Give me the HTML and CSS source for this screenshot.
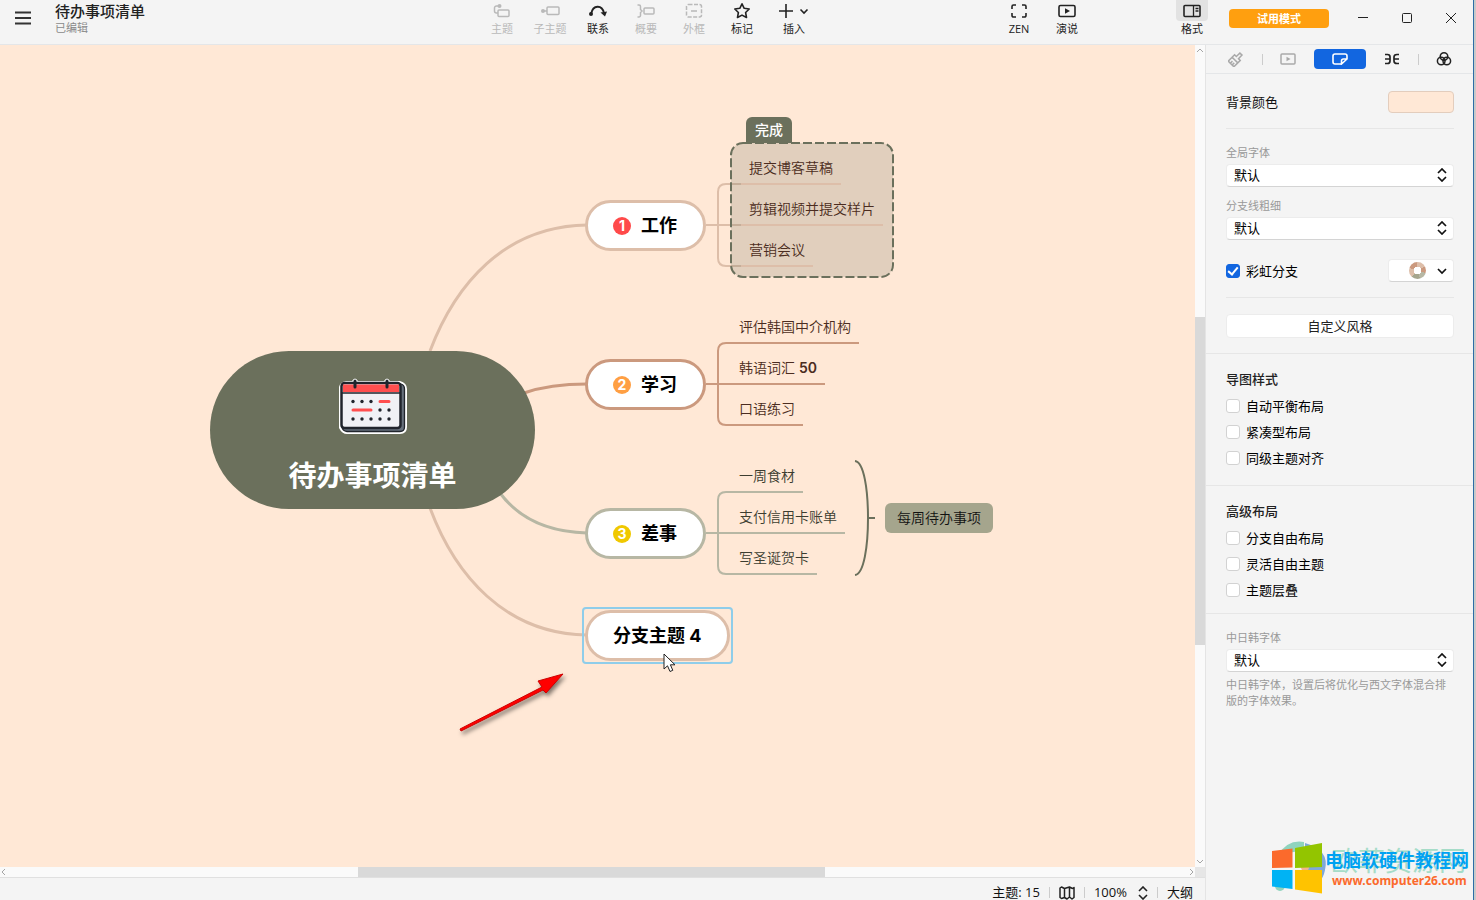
FILE: index.html
```html
<!DOCTYPE html>
<html lang="zh-CN">
<head>
<meta charset="utf-8">
<title>待办事项清单</title>
<link rel="stylesheet" href="styles.css">
</head>
<body>
<div class="desktop">
<div class="app">
  <header class="topbar">
    <div class="brand">
      <button class="menu-btn" aria-label="菜单"><svg width="16" height="14" viewBox="0 0 16 14"><path d="M0 1.500h16M0 7h16M0 12.500h16" stroke="#333" stroke-width="1.800" fill="none"/></svg></button>
      <div class="doc"><h1>待办事项清单</h1><p>已编辑</p></div>
    </div>
    <nav class="tools">
      <button class="tool" disabled><span class="tool-icon"><svg width="18" height="16" viewBox="0 0 18 16"><g fill="none" stroke="currentColor" stroke-width="1.500"><rect x="5" y="7" width="11" height="6.500" rx="1"/><path d="M5 10H3.500A2 2 0 0 1 1.500 8V5A2 2 0 0 1 3.500 3H6"/></g><circle cx="6.500" cy="3" r="2" fill="currentColor"/></svg></span>主题</button>
      <button class="tool" disabled><span class="tool-icon"><svg width="20" height="16" viewBox="0 0 20 16"><rect x="7" y="4" width="12" height="7.500" rx="1" fill="none" stroke="currentColor" stroke-width="1.500"/><path d="M3 8h4" stroke="currentColor" stroke-width="1.500"/><circle cx="3" cy="8" r="2" fill="currentColor"/></svg></span>子主题</button>
      <button class="tool"><span class="tool-icon"><svg width="20" height="16" viewBox="0 0 20 16"><path d="M3 11C5 1.500 14 1.500 16 10" fill="none" stroke="currentColor" stroke-width="1.800"/><circle cx="3" cy="11" r="2" fill="currentColor"/><path d="M12.500 9.500L19 8.500L17 13.500Z" fill="currentColor"/></svg></span>联系</button>
      <button class="tool" disabled><span class="tool-icon"><svg width="20" height="16" viewBox="0 0 20 16"><path d="M1.500 2H3A1.500 1.500 0 0 1 4.500 3.500V6.500L6 8L4.500 9.500V12.500A1.500 1.500 0 0 1 3 14H1.500" fill="none" stroke="currentColor" stroke-width="1.500"/><rect x="8" y="5" width="10" height="6" rx="1" fill="none" stroke="currentColor" stroke-width="1.500"/></svg></span>概要</button>
      <button class="tool" disabled><span class="tool-icon"><svg width="18" height="16" viewBox="0 0 18 16"><rect x="1.500" y="1.500" width="15" height="12.500" rx="2" fill="none" stroke="currentColor" stroke-width="1.500" stroke-dasharray="4 1.500"/><path d="M6 8h6" stroke="currentColor" stroke-width="1.500"/></svg></span>外框</button>
      <button class="tool"><span class="tool-icon"><svg width="18" height="18" viewBox="0 0 18 18"><path d="M9 1.800L11.200 6.300L16.200 7L12.600 10.500L13.500 15.500L9 13.100L4.500 15.500L5.400 10.500L1.800 7L6.800 6.300Z" fill="none" stroke="currentColor" stroke-width="1.600" stroke-linejoin="round"/></svg></span>标记</button>
      <button class="tool tool-wide"><span class="tool-icon"><svg width="30" height="16" viewBox="0 0 30 16"><path d="M0 8h14M7 1v14M21.500 6.500L25 10L28.500 6.500" fill="none" stroke="currentColor" stroke-width="1.600"/></svg></span>插入</button>
    </nav>
    <nav class="tools tools-view">
      <button class="tool"><span class="tool-icon"><svg width="18" height="16" viewBox="0 0 18 16"><path d="M6 2H3.500A1.500 1.500 0 0 0 2 3.500V6M12 2h2.500A1.500 1.500 0 0 1 16 3.500V6M2 10v2.500A1.500 1.500 0 0 0 3.500 14H6M16 10v2.500a1.500 1.500 0 0 1-1.500 1.500H12" fill="none" stroke="currentColor" stroke-width="1.600"/></svg></span>ZEN</button>
      <button class="tool"><span class="tool-icon"><svg width="18" height="16" viewBox="0 0 18 16"><rect x="1" y="2.500" width="16" height="11" rx="1.500" fill="none" stroke="currentColor" stroke-width="1.600"/><path d="M7 5.300V10.700L12 8Z" fill="currentColor"/></svg></span>演说</button>
    </nav>
    <nav class="tools tools-format">
      <button class="tool"><span class="tool-icon tool-on"><svg width="18" height="16" viewBox="0 0 18 16"><rect x="1" y="2.500" width="16" height="11" rx="1" fill="none" stroke="currentColor" stroke-width="1.600"/><path d="M10.500 2.500v11M12.500 5.500h3M12.500 8h3" fill="none" stroke="currentColor" stroke-width="1.300"/></svg></span>格式</button>
    </nav>
    <button class="trial">试用模式</button>
    <div class="win">
      <button aria-label="最小化"><svg width="12" height="12" viewBox="0 0 12 12"><path d="M1 5.500h10" stroke="#222"/></svg></button>
      <button aria-label="最大化"><svg width="12" height="12" viewBox="0 0 12 12"><rect x="1.500" y="1.500" width="9" height="9" rx="1" stroke="#222" fill="none"/></svg></button>
      <button aria-label="关闭"><svg width="12" height="12" viewBox="0 0 12 12"><path d="M1 1l10 10M11 1L1 11" stroke="#222"/></svg></button>
    </div>
  </header>

  <div class="work">
    <div class="editor">
      <main class="canvas">
        <svg class="links" width="1195" height="822" viewBox="0 45 1195 822" fill="none">
          <g stroke-width="3">
            <path d="M430 351C455 285 504 226 587 225" stroke="#ddbea9"/>
            <path d="M430 508C455 575 505 634 587 635" stroke="#ddbea9"/>
            <path d="M524 393Q550 384 587 384" stroke="#cb997e"/>
            <path d="M500 493C520 520 550 532 587 533" stroke="#b7b7a4"/>
          </g>
          <g stroke-width="2">
            <path d="M706 225H741M741 184H726Q718 184 718 192V258Q718 266 726 266H741" stroke="#ddbea9"/>
            <path d="M706 384H825M859 343H726Q718 343 718 351V417Q718 425 726 425H803" stroke="#cb997e"/>
            <path d="M706 533H845M803 492H726Q718 492 718 500V566Q718 574 726 574H817" stroke="#b7b7a4"/>
            <rect x="731" y="143" width="162" height="134" rx="12" fill="#6b705c" fill-opacity=".2" stroke="#6b705c" stroke-dasharray="9 3"/>
            <path d="M741 184H841M741 225H883M741 266H813" stroke="#ddbea9"/>
            <path d="M855 461C864 462 868 490 868 518C868 546 864 574 855 575M868 518H875" stroke="#6b705c"/>
          </g>
        </svg>

        <div class="node root">
          <svg width="70" height="58" viewBox="0 0 70 58">
            <path d="M8 3H14Q17 -2 20 3H46Q49 -2 52 3H62Q69 5 69 11V49Q69 56 62 56H9Q4 56 1 50V9Q2 4 8 3Z" fill="#fff"/>
            <path d="M5 6H63Q66.500 7 66.500 11V49Q66.500 53.500 62 53.500H9Q4.500 53 4 49Z" fill="#66707c" stroke="#20242c" stroke-width="1.300"/>
            <rect x="3.500" y="5" width="59" height="45" rx="3" fill="#f0f1f5" stroke="#20242c" stroke-width="2.500"/>
            <path d="M5 6.500H61V14H5Z" fill="#ff4f4f"/><path d="M4 15H62" stroke="#20242c" stroke-width="1.500"/>
            <path d="M17 3V9M49 3V9" stroke="#20242c" stroke-width="3" stroke-linecap="round"/>
            <g fill="#20242c"><circle cx="15" cy="23.500" r="1.700"/><circle cx="24" cy="23.500" r="1.700"/><circle cx="33" cy="23.500" r="1.700"/><circle cx="42" cy="32" r="1.700"/><circle cx="51" cy="32" r="1.700"/><circle cx="15" cy="41" r="1.700"/><circle cx="24" cy="41" r="1.700"/><circle cx="33" cy="41" r="1.700"/><circle cx="42" cy="41" r="1.700"/><circle cx="51" cy="41" r="1.700"/></g>
            <path d="M42 23.500H51M15 32H33" stroke="#ff4f4f" stroke-width="3" stroke-linecap="round"/>
          </svg>
          <span>待办事项清单</span>
        </div>

        <div class="node branch b1"><span class="num">1</span>工作</div>
        <div class="node branch b2"><span class="num">2</span>学习</div>
        <div class="node branch b3"><span class="num">3</span>差事</div>
        <div class="node branch b4">分支主题 4</div>
        <div class="node selection"></div>

        <div class="node tag">完成</div>
        <div class="node leaves l1"><span>提交博客草稿</span><span>剪辑视频并提交样片</span><span>营销会议</span></div>
        <div class="node leaves l2"><span>评估韩国中介机构</span><span>韩语词汇 <b>50</b></span><span>口语练习</span></div>
        <div class="node leaves l3"><span>一周食材</span><span>支付信用卡账单</span><span>写圣诞贺卡</span></div>
        <div class="node summary">每周待办事项</div>

        <svg class="node arrow" width="120" height="72" viewBox="0 0 120 72">
          <path d="M6 59L88 17L84 11L109 4L92 23L89 20L7 61Z" fill="red" stroke="#c00" stroke-width="1" stroke-linejoin="round"/>
        </svg>
        <svg class="node pointer" width="14" height="20" viewBox="0 0 14 20"><path d="M1 1V16L4.500 12.800L7 18.500L9.800 17.300L7.400 11.800H12Z" fill="#fff" stroke="#222"/></svg>
      </main>
      <div class="vscroll"><svg width="8" height="8" viewBox="0 0 8 8"><path d="M1 6L4 3L7 6" fill="none" stroke="#a5a5a5"/></svg><i class="vthumb"></i><svg width="8" height="8" viewBox="0 0 8 8"><path d="M1 2L4 5L7 2" fill="none" stroke="#a5a5a5"/></svg></div>
      <div class="hscroll"><svg width="8" height="8" viewBox="0 0 8 8"><path d="M5 1L2 4L5 7" fill="none" stroke="#a5a5a5"/></svg><i class="hthumb"></i><svg width="8" height="8" viewBox="0 0 8 8"><path d="M3 1L6 4L3 7" fill="none" stroke="#a5a5a5"/></svg></div>
      <div class="corner"></div>
      <footer class="status">
        <span>主题: 15</span><i class="bar"></i>
        <button aria-label="导航图"><svg width="16" height="14" viewBox="0 0 16 14"><path d="M1 2L2.500 1L5.500 2.500L10.500 1L13.500 2.500L15 1.500V11.500L13 13L10.500 11L8 13L5.500 11.500L2.500 12.500L1 11.500ZM5.500 2.500V11.500M10.500 1V11" fill="none" stroke="#222" stroke-width="1.500" stroke-linejoin="round"/></svg></button><i class="bar"></i>
        <button class="zoom">100%<svg width="10" height="14" viewBox="0 0 10 14"><path d="M1 5L5 1L9 5M1 9L5 13L9 9" fill="none" stroke="#222" stroke-width="1.600"/></svg></button><i class="bar"></i>
        <button>大纲</button>
      </footer>
    </div>

    <aside class="panel">
      <nav class="tabs">
        <button class="off" aria-label="样式"><svg width="16" height="16" viewBox="0 0 16 16"><g transform="rotate(45 8 8)" fill="none" stroke="currentColor" stroke-width="1.500"><path d="M6.500 1H9.500V6H12V9.500H4V6H6.500ZM4 9.500V15H12V9.500M7 15V12M9.500 15V12"/></g></svg></button>
        <i class="bar"></i>
        <button class="off" aria-label="演说"><svg width="16" height="12" viewBox="0 0 16 12"><rect x="1" y="1" width="14" height="10" rx="1" fill="none" stroke="currentColor" stroke-width="1.500"/><path d="M6.500 3.800V8.200L10.500 6Z" fill="currentColor"/></svg></button>
        <button class="on" aria-label="画布"><svg width="16" height="12" viewBox="0 0 16 12"><path d="M9 11H3A2 2 0 0 1 1 9V3A2 2 0 0 1 3 1H13A2 2 0 0 1 15 3V6L9.500 11V8A2 2 0 0 1 11.500 6H15" fill="none" stroke="currentColor" stroke-width="1.600"/></svg></button>
        <button aria-label="骨架"><svg width="16" height="12" viewBox="0 0 16 12"><path d="M1 1.500H3.500Q6 1.500 6 4V8Q6 10.500 3.500 10.500H1M1 6H6M10 6H15M15 1.500H13Q10 1.500 10 4V8Q10 10.500 13 10.500H15" fill="none" stroke="currentColor" stroke-width="1.700"/></svg></button>
        <i class="bar"></i>
        <button aria-label="配色"><svg width="16" height="16" viewBox="0 0 16 16"><g fill="none" stroke="currentColor" stroke-width="1.500"><circle cx="8" cy="5.500" r="3.800"/><circle cx="5.200" cy="10" r="3.800"/><circle cx="10.800" cy="10" r="3.800"/></g></svg></button>
      </nav>

      <section class="block">
        <div class="row split"><label for="bg">背景颜色</label><button id="bg" class="swatch" aria-label="背景颜色"></button></div>
        <hr>
        <label class="cap" for="font">全局字体</label>
        <div class="pick"><select id="font"><option>默认</option></select><svg width="10" height="14" viewBox="0 0 10 14"><path d="M1 5L5 1L9 5M1 9L5 13L9 9" fill="none" stroke="#111" stroke-width="1.700"/></svg></div>
        <label class="cap cap-next" for="line">分支线粗细</label>
        <div class="pick"><select id="line"><option>默认</option></select><svg width="10" height="14" viewBox="0 0 10 14"><path d="M1 5L5 1L9 5M1 9L5 13L9 9" fill="none" stroke="#111" stroke-width="1.700"/></svg></div>
        <div class="row split rainbow">
          <label class="check"><input type="checkbox" checked><span>彩虹分支</span></label>
          <button class="palette" aria-label="彩虹配色"><i class="ring"></i><svg width="10" height="8" viewBox="0 0 10 8"><path d="M1 2L5 6L9 2" fill="none" stroke="#111" stroke-width="1.700"/></svg></button>
        </div>
        <hr>
        <button class="custom">自定义风格</button>
      </section>

      <section class="block checks">
        <h2>导图样式</h2>
        <label class="check"><input type="checkbox"><span>自动平衡布局</span></label>
        <label class="check"><input type="checkbox"><span>紧凑型布局</span></label>
        <label class="check"><input type="checkbox"><span>同级主题对齐</span></label>
      </section>

      <section class="block checks tight">
        <h2>高级布局</h2>
        <label class="check"><input type="checkbox"><span>分支自由布局</span></label>
        <label class="check"><input type="checkbox"><span>灵活自由主题</span></label>
        <label class="check"><input type="checkbox"><span>主题层叠</span></label>
      </section>

      <section class="block last">
        <label class="cap" for="cjk">中日韩字体</label>
        <div class="pick"><select id="cjk"><option>默认</option></select><svg width="10" height="14" viewBox="0 0 10 14"><path d="M1 5L5 1L9 5M1 9L5 13L9 9" fill="none" stroke="#111" stroke-width="1.700"/></svg></div>
        <p class="note">中日韩字体，设置后将优化与西文字体混合排版的字体效果。</p>
      </section>
    </aside>
  </div>

  <svg class="watermark" width="200" height="60" viewBox="1270 838 200 60">
    <path d="M1278 855Q1288 839 1304 842L1304 850Z" fill="#8fd3bd"/>
    <path d="M1305 843Q1330 850 1325 870Q1322 886 1305 889Z" fill="#7fa8d8"/>
    <circle cx="1280" cy="886" r="5" fill="#8fd3bd"/><circle cx="1305" cy="867" r="4" fill="#f2b48a"/>
    <path d="M1272 851L1292.500 848.500V867.500L1272 868Z" fill="#fb6a2c"/>
    <path d="M1295 848L1322 843V867L1295 868Z" fill="#93c500"/>
    <path d="M1272 870H1292.500V889L1272 886.500Z" fill="#00b3f4"/>
    <path d="M1295 870H1322V893.500L1295 889.500Z" fill="#ffc300"/>
    <text x="1331" y="871" class="wm-back">欧菲资源网</text>
    <text x="1325" y="867" class="wm-name">电脑软硬件教程网</text>
    <text x="1332" y="885" class="wm-url">www.computer26.com</text>
  </svg>
</div>
</div>
</body>
</html>
```
FILE: styles.css
```css
* { box-sizing: border-box; }
body {
  margin: 0;
  font: 13px/20px "Open Sans", "Noto Sans CJK SC", sans-serif;
  color: #111;
  background: #c9c9c9;
  overflow: hidden;
}
button {
  padding: 0;
  border: 0;
  background: none;
  font: inherit;
  color: inherit;
  display: flex;
  align-items: center;
  justify-content: center;
}
h1, h2, p { margin: 0; }
svg { display: block; flex: none; }

.desktop { padding-right: 2px; height: 100vh; }
.app {
  position: relative;
  height: 100%;
  display: flex;
  flex-direction: column;
  background: #f4f4f4;
  border-right: 1px solid #2c6da6;
}

/* top bar */
.topbar {
  flex: none;
  height: 45px;
  display: flex;
  border-bottom: 1px solid #e4e6e8;
}
.brand { flex: 478 1 0; display: flex; gap: 24px; }
.menu-btn { height: 36px; margin-left: 15px; }
.doc h1 { font-size: 15px; line-height: 20px; font-weight: 500; padding-top: 1px; color: #222; }
.doc p { font-size: 11px; line-height: 14px; color: #8a8a8a; }
.tools { display: flex; }
.tools-view { flex: 269 1 0; justify-content: flex-end; }
.tools-format { flex: 125 1 0; justify-content: flex-end; }
.tool {
  width: 48px;
  flex-direction: column;
  justify-content: flex-start;
  font-size: 11px;
  line-height: 16px;
  color: #222;
}
.tool:disabled { color: #b9b9b9; }
.tool-wide { width: 56px; }
.tool-icon {
  display: flex;
  align-items: center;
  justify-content: center;
  height: 21px;
  width: 32px;
}
.tool-on { background: #e2e2e2; border-radius: 0 0 4px 4px; }
.trial {
  width: 100px;
  height: 19px;
  margin: 9px 12px 0 13px;
  border-radius: 4px;
  background: #ff9f0f;
  color: #fff;
  font-size: 11px;
  font-weight: 700;
}
.win { display: flex; height: 36px; }
.win button { width: 44px; }

.work { flex: 1; min-height: 0; display: flex; }
.editor {
  flex: 1;
  min-width: 0;
  display: grid;
  grid-template: minmax(0, 1fr) 10px 23px / minmax(0, 1fr) 10px;
}

/* map canvas */
.canvas { position: relative; overflow: hidden; background: #ffe8d6; }
.links { position: absolute; left: 0; top: 0; }
.node { position: absolute; white-space: nowrap; }
.root {
  left: 210px;
  top: 306px;
  width: 325px;
  height: 158px;
  border-radius: 79px;
  background: #6b705c;
  color: #fff;
  font-size: 28px;
  font-weight: 700;
  line-height: 40px;
  display: flex;
  flex-direction: column;
  align-items: center;
  padding-top: 27px;
  gap: 19px;
}
.branch {
  left: 585px;
  height: 51px;
  padding: 0 26px 0 25px;
  border: 3px solid #ddbea9;
  border-radius: 26px;
  background: #fff;
  color: #000;
  font: 700 18px/24px Inter, "Noto Sans CJK SC", sans-serif;
  display: flex;
  align-items: center;
  gap: 10px;
}
.b1 { top: 155px; }
.b2 { top: 314px; border-color: #cb997e; }
.b3 { top: 463px; border-color: #b7b7a4; }
.b4 { top: 565px; }
.num {
  width: 18px;
  height: 18px;
  border-radius: 9px;
  background: #ff4a4a;
  color: #fff;
  font-size: 14px;
  line-height: 18px;
  text-align: center;
}
.b2 .num { background: #ff9f43; }
.b3 .num { background: #f0c800; }
.selection {
  left: 582px;
  top: 562px;
  width: 151px;
  height: 57px;
  border: 2px solid #8fcdea;
  border-radius: 4px;
}
.tag {
  left: 746px;
  top: 72px;
  padding: 3px 9px;
  border-radius: 6px 6px 0 0;
  background: #6b705c;
  color: #fff;
  font-size: 14px;
  font-weight: 500;
}
.leaves {
  display: flex;
  flex-direction: column;
  gap: 17px;
  font: 350 14px/24px Inter, "Noto Sans CJK SC", sans-serif;
  color: #4b2c20;
}
.leaves b { font-weight: 600; }
.l1 { left: 749px; top: 111px; }
.l2 { left: 739px; top: 270px; }
.l3 { left: 739px; top: 419px; color: #3c3d30; }
.summary {
  left: 885px;
  top: 458px;
  padding: 5px 12px;
  border-radius: 6px;
  background: #a5a58d;
  color: #111;
  font-size: 14px;
  font-weight: 350;
}
.arrow { left: 454px; top: 625px; filter: drop-shadow(2px 3px 2px rgba(0, 0, 0, .5)); }
.pointer { left: 663px; top: 608px; }

/* scroll bars */
.vscroll, .hscroll {
  display: flex;
  align-items: center;
  justify-content: space-between;
  background: #fafafa;
}
.vscroll { flex-direction: column; padding: 1px 0; }
.vthumb { flex: none; width: 10px; height: 40%; margin-top: 50px; background: #d9d9d9; }
.hthumb { flex: none; width: 39%; height: 10px; margin-right: 12px; background: #d9d9d9; }
.corner { background: #e6e6e6; }

.status {
  grid-column: 1 / -1;
  border-top: 1px solid #e0e0e0;
  padding: 7px 12px 0 0;
  display: flex;
  align-items: flex-start;
  justify-content: flex-end;
  gap: 9px;
  line-height: 15px;
}
.status button { height: 15px; }
.status .bar { margin-top: 2px; }
.zoom { gap: 11px; }
.bar { width: 1px; height: 11px; background: #ccc; }

/* format panel */
.panel { flex: none; width: 268px; border-left: 1px solid #e4e4e4; }
.tabs {
  height: 29px;
  border-bottom: 1px solid #e4e6e8;
  padding: 0 3px 0 4px;
  display: flex;
  align-items: center;
}
.tabs button { width: 52px; height: 20px; color: #222; }
.tabs .off { color: #a9a9a9; }
.tabs .on { background: #1266e0; color: #fff; border-radius: 4px; }
.tabs .bar { margin: 0 -1px 0 0; }
.block { padding: 16px 19px 15px 20px; border-bottom: 1px solid #e6e6e6; }
.block.last { border-bottom: 0; }
.block hr { border: 0; border-top: 1px solid #e6e6e6; margin: 14px 0 16px; }
.row { display: flex; align-items: center; height: 24px; }
.split { justify-content: space-between; }
.swatch { width: 66px; height: 22px; border: 1px solid #e3cdbd; border-radius: 4px; background: #ffe8d6; }
.cap { display: block; font-size: 11px; line-height: 16px; color: #999; margin-bottom: 3px; }
.cap-next { margin-top: 11px; }
.pick { position: relative; }
.pick select {
  display: block;
  appearance: none;
  width: 100%;
  height: 23px;
  padding: 0 7px 1px;
  border: 1px solid #ececec;
  border-bottom-color: #d4d4d4;
  border-radius: 4px;
  background: #fff;
  color: #000;
  font: inherit;
}
.pick svg { position: absolute; right: 7px; top: 4px; pointer-events: none; }
.rainbow { margin-top: 18px; height: 25px; }
.check { display: flex; align-items: center; gap: 6px; height: 26px; color: #000; }
.check input {
  appearance: none;
  width: 14px;
  height: 14px;
  margin: 0;
  border: 1px solid #d2d2d2;
  border-radius: 3px;
  background: #fff;
}
.check input:checked { background: #1266e0; border-color: #1266e0; display: grid; place-items: center; }
.check input:checked::before {
  content: "";
  width: 8px;
  height: 4px;
  border: solid #fff;
  border-width: 0 0 2px 2px;
  transform: translateY(-1px) rotate(-50deg);
}
.palette {
  width: 66px;
  height: 23px;
  border: 1px solid #ececec;
  border-bottom-color: #d4d4d4;
  border-radius: 4px;
  background: #fff;
  justify-content: flex-end;
  padding-right: 6px;
  gap: 11px;
}
.ring {
  width: 17px;
  height: 17px;
  border-radius: 50%;
  background: radial-gradient(#fff 0 4px, transparent 4px), conic-gradient(#ddbea9 0 17%, #cb997e 0 30%, #b7b7a4 0 45%, #a5a58d 0 62%, #ddbea9 0 80%, #cb997e 0);
}
.custom { width: 100%; height: 24px; background: #fff; border: 1px solid #ececec; border-radius: 4px; color: #222; }
.checks { padding: 15px 19px 14px 20px; }
.checks.tight { padding-bottom: 10px; }
.checks h2 { font-size: 13px; line-height: 20px; font-weight: 500; margin-bottom: 4px; color: #222; }
.note { margin-top: 5px; font-size: 11px; line-height: 16px; color: #999; }

.watermark { position: absolute; right: 3px; bottom: 2px; }
.wm-back { font: 400 27px "Noto Sans CJK SC", sans-serif; fill: #a5dcc8; }
.wm-name { font: 700 18px "Noto Sans CJK SC", sans-serif; fill: #00a2f2; }
.wm-url { font: 700 12px "Noto Sans", sans-serif; fill: #fb6a2c; }
```
